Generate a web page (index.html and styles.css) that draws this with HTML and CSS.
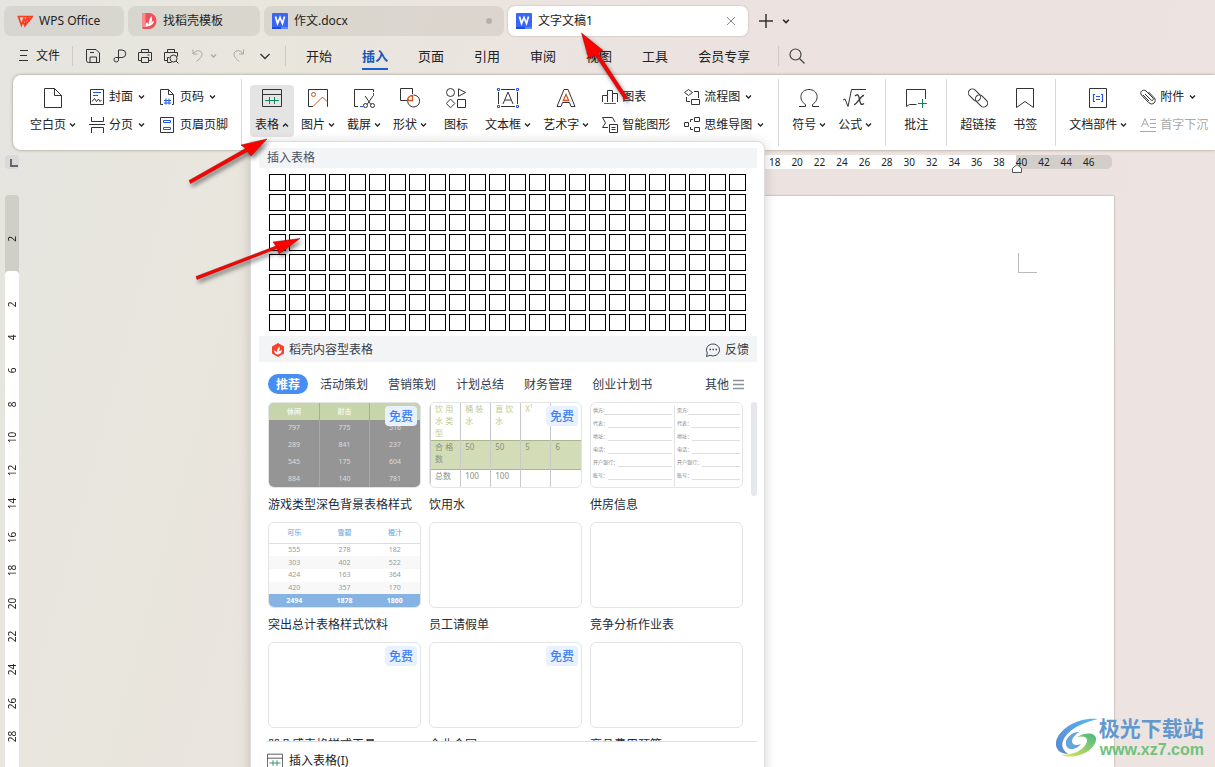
FILE: index.html
```html
<!DOCTYPE html>
<html lang="zh-CN">
<head>
<meta charset="utf-8">
<title>文字文稿1 - WPS Office</title>
<link rel="stylesheet" href="styles.css">
</head>
<body>
<svg class="defs" aria-hidden="true">
  <symbol id="down" viewBox="0 0 7 6"><path d="M1 1.5l2.5 2.5L6 1.5" fill="none" stroke="currentColor" stroke-width="1.3"/></symbol>
  <symbol id="up" viewBox="0 0 7 6"><path d="M1 4.5L3.5 2 6 4.5" fill="none" stroke="currentColor" stroke-width="1.3"/></symbol>
  <symbol id="wdoc" viewBox="0 0 16 16"><rect width="16" height="16" rx="1" fill="#3b66f5"/><path d="M0 14h9v2H0z" fill="#1d4bd8"/><path d="M9 14h7v2H9z" fill="#5b8cff"/><path d="M3.5 3.5l2 7L8 4.5l2.500 6 2-7" fill="none" stroke="#fff" stroke-width="1.700"/></symbol>
  <symbol id="table" viewBox="0 0 20 20"><path d="M.5 1.500h19v17H.5zM.5 6.500h19" fill="none" stroke="#333"/><path d="M3 12.500h14M7.500 9v7M12.500 9v7" stroke="#0c8457" fill="none"/></symbol>
</svg>

<div class="window">
  <header class="tabbar">
    <button class="tab tab-home"><svg width="16" height="16" viewBox="0 0 16 16"><path d="M.5 3.500h10L8.500 9 7 5.500 4.500 12 1.500 3.700M9 8l-1.200 4.500L6 8.500M8 12.500L15.500 3.500h-4l-1 3M11.500 3.500L12 9" fill="none" stroke="#ff3b1f" stroke-width="1.700"/></svg>WPS Office</button>
    <button class="tab tab-template"><svg width="15" height="16" viewBox="0 0 14 16"><path d="M0 0h6.500a7.500 8 0 0 1 0 16H0z" fill="#ee5158"/><path d="M0 0h3v14H0z" fill="#f88"/><path d="M3 14C3 8 5 9 6 11.500 6.500 7 7.500 5 9 3c1 3 .5 5-.5 7 1-1.500 2-2 3-2C11 12 7 13 3 14z" fill="#fff"/></svg>找稻壳模板</button>
    <button class="tab tab-doc"><svg width="16" height="16"><use href="#wdoc"/></svg>作文.docx<span class="dot"></span></button>
    <button class="tab tab-doc active"><svg width="16" height="16"><use href="#wdoc"/></svg>文字文稿1<svg class="close" width="10" height="10" viewBox="0 0 10 10"><path d="M1 1l8 8M9 1L1 9" stroke="#888"/></svg></button>
    <button class="bare new" aria-label="新建"><svg width="14" height="14" viewBox="0 0 14 14"><path d="M7 0v14M0 7h14" stroke="#333" stroke-width="1.500"/></svg></button>
    <button class="bare" aria-label="标签列表"><svg width="8" height="7"><use href="#down"/></svg></button>
  </header>

  <nav class="menubar">
    <button class="bare file"><svg width="10" height="12" viewBox="0 0 10 12"><path d="M1 .5h8M1 5.500h7M0 10.500h9" stroke="#333"/></svg>文件</button>
    <span class="sep"></span>
    <div class="quick">
      <button class="bare" aria-label="保存"><svg width="16" height="16" viewBox="0 0 16 16" fill="none" stroke="#333"><path d="M1.500 1.500h9.500l3.500 3.500v9.500h-11a2 2 0 0 1-2-2zM5 14.500V9h6.500v5.500M5 4.500h4"/></svg></button>
      <button class="bare" aria-label="输出为PDF"><svg width="16" height="16" viewBox="0 0 16 16" fill="none" stroke="#333"><path d="M7.500 12V2h3.500a3 3 0 0 1 0 7.500H4.500a2.300 2.300 0 1 0 3 2.500"/></svg></button>
      <button class="bare" aria-label="打印"><svg width="16" height="16" viewBox="0 0 16 16" fill="none" stroke="#333"><path d="M4.500 4.500v-3h7v3M4 12.500H1.500v-8h13v8H12M4.500 9.500h7v5h-7zM10.500 7h2"/></svg></button>
      <button class="bare" aria-label="打印预览"><svg width="16" height="16" viewBox="0 0 16 16" fill="none" stroke="#333"><path d="M4.500 4.500v-3h7v3M4 12.500H1.500v-8h13v4M4.500 14.500V9.500h2M4.500 14.500h4"/><circle cx="10.500" cy="10.500" r="3.500"/><path d="M13 13l2.500 2.500"/></svg></button>
      <button class="bare dim undo" aria-label="撤销"><svg width="16" height="16" viewBox="0 0 16 16" fill="none" stroke="currentColor"><path d="M4 1.500v4.500h4.500M4 6C7 1 13.500 2 13 7 12.500 10 10 11 7.500 13.500"/></svg><svg width="7" height="6"><use href="#down"/></svg></button>
      <button class="bare dim redo" aria-label="恢复"><svg width="16" height="16" viewBox="0 0 16 16" fill="none" stroke="currentColor"><path d="M12.500 1.500v4.500H8M12.500 6C9 1 2.500 2 3 7 3.500 10 6 11 8 13.500"/></svg></button>
      <button class="bare" aria-label="更多"><svg width="16" height="16" viewBox="0 0 16 16" fill="none" stroke="#333" stroke-width="1.300"><path d="M3.500 6L8 10.500 12.500 6"/></svg></button>
    </div>
    <span class="sep"></span>
    <div class="menus">
      <button class="bare">开始</button><button class="bare current">插入</button><button class="bare">页面</button><button class="bare">引用</button><button class="bare">审阅</button><button class="bare">视图</button><button class="bare">工具</button><button class="bare">会员专享</button>
    </div>
    <span class="sep"></span>
    <button class="bare search" aria-label="搜索"><svg width="16" height="16" viewBox="0 0 16 16" fill="none" stroke="#444" stroke-width="1.200"><circle cx="6.500" cy="6.500" r="5.500"/><path d="M10.500 10.500l5 5"/></svg></button>
  </nav>

  <section class="ribbon">
    <div class="group first">
      <button class="big"><svg width="20" height="20" viewBox="0 0 20 20" fill="none" stroke="#333"><path d="M1.500.5h10l7 7v12h-17zM11.500.5v7h7"/></svg><span>空白页<svg width="7" height="6"><use href="#down"/></svg></span></button>
      <div class="column">
        <button class="small"><svg width="16" height="16" viewBox="0 0 16 16" fill="none" stroke="#333"><path d="M1.500.5h13v15h-13z"/><path d="M4 3.500h8M4 6.500h5" stroke="#2456e0"/><path d="M3 12.500l2.500-3 2 3 2-2.500 1.500 2.500 1.500-1.500"/></svg>封面<svg class="caret" width="7" height="6"><use href="#down"/></svg></button>
        <button class="small"><svg width="16" height="16" viewBox="0 0 16 16" fill="none" stroke="#333"><path d="M2.500 0v4.500h12V0M0 7.500h16M2.500 16v-5.500h12V16"/></svg>分页<svg class="caret" width="7" height="6"><use href="#down"/></svg></button>
      </div>
      <div class="column">
        <button class="small"><svg width="16" height="16" viewBox="0 0 16 16" fill="none" stroke="#333"><path d="M3 15.500H.5V.5h8l5 5v10H12M8.500.5v5h5"/><path d="M6 9.500v6M9 9.500v6M4 11.500h7M4 14h7" stroke="#2456e0"/></svg>页码<svg class="caret" width="7" height="6"><use href="#down"/></svg></button>
        <button class="small"><svg width="16" height="16" viewBox="0 0 16 16" fill="none" stroke="#333"><path d="M.5.5h13v15H.5z"/><path d="M3.500 3.500h7v2h-7zM3.500 10.500h7v2h-7z" stroke="#2456e0"/></svg>页眉页脚</button>
      </div>
    </div>

    <div class="group">
      <div class="anchor">
        <button class="big pressed" aria-expanded="true"><svg width="20" height="20"><use href="#table"/></svg><span>表格<svg width="7" height="6"><use href="#up"/></svg></span></button>

        <div class="popup">
          <h2 class="strip">插入表格</h2>
          <div class="picker" id="picker"></div>
          <div class="strip store"><svg width="14" height="14" viewBox="0 0 14 14"><path d="M7 0l6 3.500v7L7 14l-6-3.500v-7z" fill="#f5412d"/><path d="M3 7.500c1.500 0 2.500 1 3 2 0-3 .5-4.500 2.500-6 0 2 .5 3-.5 4.500 1-.5 2-.5 3-.500-.5 3-3 4-4.500 4C4.500 11 3.300 10 3 7.500z" fill="#fff"/></svg><h2>稻壳内容型表格</h2>
            <button class="bare feedback"><svg width="16" height="16" viewBox="0 0 16 16" fill="none" stroke="#3d4757"><path d="M1.500 14.500l.800-3.500A6.600 6 0 1 1 5 13.300z"/><path d="M4.500 7.500H6M7.500 7.500H9M10.500 7.500H12" stroke-width="1.500"/></svg>反馈</button></div>
          <div class="cats">
            <button class="bare chosen">推荐</button><button class="bare">活动策划</button><button class="bare">营销策划</button><button class="bare">计划总结</button><button class="bare">财务管理</button><button class="bare">创业计划书</button>
            <button class="bare other">其他<svg width="11" height="11" viewBox="0 0 11 11"><path d="M0 1.500h11M0 5.500h11M0 9.500h11" stroke="#8a919e" stroke-width="1.500"/></svg></button>
          </div>
          <div class="scroller">
            <div class="cards">
              <a class="card" href="#"><span class="thumb"><table class="t-dark"><tr><th>休闲</th><th>射击</th><th>竞技</th></tr><tr><td>797</td><td>775</td><td>516</td></tr><tr><td>289</td><td>841</td><td>237</td></tr><tr><td>545</td><td>175</td><td>604</td></tr><tr><td>884</td><td>140</td><td>781</td></tr></table><b class="free">免费</b></span>游戏类型深色背景表格样式</a>
              <a class="card" href="#"><span class="thumb"><table class="t-water"><tr class="head"><th>饮 用<br>水 类<br>型</th><th>桶 装<br>水</th><th>直 饮<br>水</th><th>X<sup>1</sup></th><th></th></tr><tr class="mid"><td>合 格<br>数</td><td>50</td><td>50</td><td>5</td><td>6</td></tr><tr><td>总数</td><td>100</td><td>100</td><td></td><td></td></tr></table><b class="free">免费</b></span>饮用水</a>
              <a class="card" href="#"><span class="thumb form"><span class="half"><i>供方:</i><i>代表：</i><i>地址：</i><i>电话：</i><i>开户银行：</i><i>账号：</i></span><span class="half"><i>需方:</i><i>代表：</i><i>地址：</i><i>电话：</i><i>开户银行：</i><i>账号：</i></span></span>供房信息</a>
              <a class="card" href="#"><span class="thumb"><table class="t-drink"><tr><th>可乐</th><th>雪碧</th><th>橙汁</th></tr><tr><td>555</td><td>278</td><td>182</td></tr><tr><td>303</td><td>402</td><td>522</td></tr><tr><td>424</td><td>163</td><td>364</td></tr><tr><td>420</td><td>357</td><td>170</td></tr><tr class="sum"><td>2494</td><td>1878</td><td>1860</td></tr></table></span>突出总计表格样式饮料</a>
              <a class="card" href="#"><span class="thumb"></span>员工请假单</a>
              <a class="card" href="#"><span class="thumb"></span>竞争分析作业表</a>
              <a class="card" href="#"><span class="thumb"><b class="free">免费</b></span>凹凸感表格样式工具</a>
              <a class="card" href="#"><span class="thumb"><b class="free">免费</b></span>企业合同</a>
              <a class="card" href="#"><span class="thumb"></span>商品费用预算</a>
            </div>
            <span class="bar"></span>
          </div>
          <button class="bare insert"><svg width="16" height="16" viewBox="0 0 20 20"><use href="#table"/></svg>插入表格(I)</button>
        </div>
      </div>
      <button class="big"><svg width="20" height="20" viewBox="0 0 20 20" fill="none" stroke="#333"><path d="M5 18.500H.5v-17h19v17H19"/><circle cx="5.500" cy="6.500" r="2" stroke="#d4551c"/><path d="M5 18.500L14.500 9l5 5" stroke="#d4551c"/></svg><span>图片<svg width="7" height="6"><use href="#down"/></svg></span></button>
      <button class="big"><svg width="22" height="20" viewBox="0 0 22 20" fill="none" stroke="#333"><path d="M5 18.500H1.500v-17h19V4"/><path d="M20.500 5v3M7 18.500h3" stroke="#2456e0"/><path d="M12 8l6 8.500M20 8l-6 8.500"/><circle cx="12.500" cy="17.500" r="2"/><circle cx="19.500" cy="17.500" r="2"/></svg><span>截屏<svg width="7" height="6"><use href="#down"/></svg></span></button>
      <button class="big"><svg width="20" height="20" viewBox="0 0 20 20" fill="none" stroke="#333"><path d="M7 12.500H.5V.5h12V6M8 11a6 6 0 1 0 5.500-4"/><path d="M7.500 12.500h5v-5a5 5 0 0 0-5 5z" stroke="#d4551c" stroke-width="1.300"/></svg><span>形状<svg width="7" height="6"><use href="#down"/></svg></span></button>
      <button class="big"><svg width="20" height="20" viewBox="0 0 20 20" fill="none" stroke="#333"><circle cx="4.500" cy="4.500" r="4"/><path d="M12.500.8v7.500l7-3.800zM4.500 11l4.300 4.500-4.300 4.300L.3 15.500zM11.500 11.500h8v8h-8z"/></svg><span>图标</span></button>
      <button class="big"><svg width="22" height="20" viewBox="0 0 22 20" fill="none" stroke="#333"><path d="M4 1.500h14M4 18.500h14M1.500 4v12M20.500 4v12M6 16l5-12 5 12M8 12h6"/><path d="M.5.500h2v2h-2zM19.500.5h2v2h-2zM.5 17.500h2v2h-2zM19.500 17.500h2v2h-2z" stroke="#2456e0"/></svg><span>文本框<svg width="7" height="6"><use href="#down"/></svg></span></button>
      <button class="big"><svg width="20" height="20" viewBox="0 0 20 20" fill="none" stroke="#333"><path d="M8 1.500h4l7 17h-4l-1.500-4h-7l-1.500 4H1z"/><path d="M10 6.500L7.300 12.500h5.400z" stroke="#d4551c" stroke-width="1.300"/></svg><span>艺术字<svg width="7" height="6"><use href="#down"/></svg></span></button>
      <div class="column">
        <button class="small"><svg width="16" height="16" viewBox="0 0 16 16" fill="none" stroke="#333"><path d="M.5 13V6.500h5V13M5.500 6.500v-5h5V13M10.500 4.500h5V13"/><path d="M2 14.500h12" stroke="#0c8457"/></svg>图表</button>
        <button class="small"><svg width="16" height="16" viewBox="0 0 16 16" fill="none" stroke="#333"><path d="M6 10.500H.5L3.500 6 .5.500h10L13 5M7.500 7.500h8v8h-8zM9.500 10.500h4M9.500 12.500h4"/></svg>智能图形</button>
      </div>
      <div class="column">
        <button class="small"><svg width="16" height="16" viewBox="0 0 16 16" fill="none" stroke="#333"><path d="M4.500.5l4 3-4 3-4-3zM10 2.500h4.500V9M2.500 8v4.500H6M7.500 10.500h8v5h-8z"/></svg>流程图<svg class="caret" width="7" height="6"><use href="#down"/></svg></button>
        <button class="small"><svg width="16" height="16" viewBox="0 0 16 16" fill="none" stroke="#333"><path d="M.5 5.500h4v4h-4zM10.500.5h5v4h-5zM10.500 10.500h5v4h-5zM9 2.500H6.500V5M9 12.500H6.500V10"/></svg>思维导图<svg class="caret" width="7" height="6"><use href="#down"/></svg></button>
      </div>
    </div>

    <div class="group">
      <button class="big"><svg width="20" height="20" viewBox="0 0 20 20" fill="none" stroke="#333"><path d="M0 18.500h6.500v-2C-1 12 1 1.500 10 1.500S21 12 13.500 16.500v2H20"/></svg><span>符号<svg width="7" height="6"><use href="#down"/></svg></span></button>
      <button class="big"><svg width="24" height="20" viewBox="0 0 24 20" fill="none" stroke="#333"><path d="M0 12l2-1 3 7.500L8.500 1.500H23"/><path d="M12 8c3-3 4 0 4.500 3.500S18 18 21 15.500M21 7.500c-3-.5-7 9-10 9" stroke-width="1.300"/></svg><span>公式<svg width="7" height="6"><use href="#down"/></svg></span></button>
    </div>
    <div class="group">
      <button class="big"><svg width="22" height="20" viewBox="0 0 22 20" fill="none" stroke="#333"><path d="M20.500 11V1.500h-19v17l3-2h7"/><path d="M17.500 11v9M13 15.500h9" stroke="#0c8457"/></svg><span>批注</span></button>
    </div>
    <div class="group">
      <button class="big wide"><svg width="20" height="20" viewBox="0 0 20 20" fill="none" stroke="#333"><rect x="-.500" y="3" width="14" height="8" rx="4" transform="rotate(45 6.500 7)"/><rect x="6.500" y="9" width="14" height="8" rx="4" transform="rotate(45 13.500 13)"/></svg><span>超链接</span></button>
      <button class="big"><svg width="20" height="20" viewBox="0 0 20 20" fill="none" stroke="#333"><path d="M1.500.5h17v19L10 13.500l-8.500 6z"/></svg><span>书签</span></button>
    </div>
    <div class="group last">
      <button class="big"><svg width="20" height="20" viewBox="0 0 20 20" fill="none" stroke="#333"><path d="M1.500.5h17v19h-17z"/><path d="M7 6.500H5.500v7H7M13 6.500h1.500v7H13M8 8.500h4M8 11.500h4" stroke="#2456e0" stroke-width="1.200"/></svg><span>文档部件<svg width="7" height="6"><use href="#down"/></svg></span></button>
      <div class="column">
        <button class="small"><svg width="16" height="16" viewBox="0 0 16 16" fill="none" stroke="#333"><path d="M5 5l6 6c1.500 1.500 3-.5 2-2L6 2C3-.5-1 3 1.500 6l7 7.500c4 4 9-1 5.500-5L8.500 3M3 6l6 6"/></svg>附件<svg class="caret" width="7" height="6"><use href="#down"/></svg></button>
        <button class="small" disabled><svg width="16" height="16" viewBox="0 0 16 16" fill="none" stroke="currentColor"><path d="M1.500 10L5 1.500 8.500 10M3 7h4M10 2.500h6M10 6.500h6M10 10.500h6M0 14.500h16"/></svg>首字下沉</button>
      </div>
    </div>
  </section>

  <main class="work">
    <aside class="vside">
      <span class="tabstop"></span>
      <ol class="vruler-top"><li>2</li></ol>
      <ol class="vruler"><li>2</li><li>4</li><li>6</li><li>8</li><li>10</li><li>12</li><li>14</li><li>16</li><li>18</li><li>20</li><li>22</li><li>24</li><li>26</li><li>28</li></ol>
    </aside>
    <div class="canvas">
      <div class="hruler"><ol><li>2</li><li>4</li><li>6</li><li>8</li><li>10</li><li>12</li><li>14</li><li>16</li><li>18</li><li>20</li><li>22</li><li>24</li><li>26</li><li>28</li><li>30</li><li>32</li><li>34</li><li>36</li><li>38</li><li>40</li><li>42</li><li>44</li><li>46</li></ol>
        <svg class="indent" width="10" height="9" viewBox="0 0 10 9"><path d="M5 .7l4.500 3.500v4.300h-9V4.200z" fill="#fff" stroke="#555"/></svg></div>
      <article class="page"><span class="corner"></span></article>
    </div>
  </main>

  <svg class="arrows" aria-hidden="true">
    <g fill="#f00" stroke="#8c1010" stroke-width=".5">
      <path d="M267 139L251 156l-3.500-4.500L190.500 183.500l-1.500-3L245.500 148.500 241 145z"/>
      <path d="M300 238.500L279 254l-2-5.500L197 279.500l-1-3L276 246l-3-4z"/>
      <path d="M581.500 33l21.500 17.500-4.500 3L627.500 97.500l-3 2L595.500 55.500 588.500 58z"/>
    </g>
  </svg>

  <div class="brand">
    <svg width="44" height="42" viewBox="0 0 44 42"><defs><linearGradient id="sky" x1="1" y1="0" x2="0" y2="1"><stop offset="0" stop-color="#58b8f0"/><stop offset="1" stop-color="#5b86cc"/></linearGradient><linearGradient id="leaf" x1="1" y1="0" x2="0" y2="1"><stop offset="0" stop-color="#45b884"/><stop offset="1" stop-color="#e3e65a"/></linearGradient></defs>
      <path d="M43 2C24 0 4 11 1 25c-1 7 4 12 12 12-7-5-7-11-3-17C17 10 30 5 43 2z" fill="url(#sky)"/><path d="M6 38c14 5 33-3 35-15 1-7-9-9-19-3 8-2 12 1 9 7-4 7-13 11-25 11z" fill="url(#leaf)"/><path d="M24 15c-9 0-16 9-12 15 3 4 10 2 14-3-5 2-9 1-9-3 0-3 3-6 7-9z" fill="#62a6dc"/></svg>
    <p><strong>极光下载站</strong><span>www.xz7.com</span></p>
  </div>
</div>
<script src="script.js"></script>
</body>
</html>
```

FILE: styles.css
```css
* { box-sizing: border-box; }
body, h2, ol, p { margin: 0; padding: 0; }
ol { list-style: none; }
body {
  font-family: "Noto Sans", "Noto Sans CJK SC", sans-serif;
  font-size: 12px;
  line-height: 16px;
  color: #222;
}
button { font: inherit; color: inherit; border: 0; background: none; padding: 0; white-space: nowrap; }
svg { flex: none; display: block; }
.defs { position: absolute; width: 0; height: 0; }
.bare { display: flex; align-items: center; }

.window {
  position: relative;
  height: 100vh;
  overflow: hidden;
  display: flex;
  flex-direction: column;
  background: linear-gradient(105deg, #e5e4e0 0, #e8e6dd 18%, #ebe4df 36%, #ece2df 60%, #ede4e1 100%);
}

/* document tabs */
.tabbar { display: flex; align-items: center; gap: 4px; padding: 6px 4px 0; height: 36px; flex: none; }
.tab { display: flex; align-items: center; gap: 6px; height: 30px; border-radius: 7px; background: rgba(90, 85, 70, .1); }
.tab-home { width: 120px; padding-left: 13px; }
.tab-template { width: 132px; padding-left: 14px; }
.tab-doc { width: 240px; padding: 0 12px 0 8px; }
.tab.active { background: #fff; box-shadow: 0 0 2px rgba(0, 0, 0, .25); }
.dot { width: 6px; height: 6px; border-radius: 3px; background: #b5b0ad; margin-left: auto; }
.close { margin-left: auto; }
.new { margin: 0 5px 0 7px; }

/* menu row */
.menubar { display: flex; align-items: center; height: 39px; padding-left: 19px; flex: none; }
.file { gap: 7px; }
.sep { width: 1px; height: 20px; background: #cdc9c5; margin: 0 12px; }
.quick { display: flex; gap: 10px; }
.undo { gap: 5px; }
.redo { margin-left: 4px; }
.dim { color: #aaa7a3; }
.menus { display: flex; gap: 30px; font-size: 13px; margin: 0 16px 0 8px; }
.menus .bare { height: 28px; padding-top: 2px; border-bottom: 2px solid transparent; }
.menus .current { color: #1558c0; font-weight: bold; border-color: #1a5fd0; }
.search { margin-left: -2px; }

/* ribbon */
.ribbon {
  position: relative;
  z-index: 1;
  display: flex;
  flex: none;
  height: 75px;
  margin-left: 13px;
  background: #fff;
  border-radius: 8px 0 0 8px;
  box-shadow: 0 0 3px rgba(70, 60, 50, .5);
}
.group { display: flex; align-items: flex-start; gap: 2px; margin: 4px 0; padding: 6px 8px 0; border-right: 1px solid #d8d8d8; }
.group.first { padding: 6px 6px 0 12px; }
.group.first .column { padding-right: 7px; }
.group.last { border: 0; }
.big {
  display: flex;
  flex-direction: column;
  align-items: center;
  justify-content: space-between;
  min-width: 44px;
  height: 52px;
  padding: 3px 5px 4px;
  border-radius: 4px;
}
.big.wide { min-width: 46px; }
.big span { display: flex; align-items: center; gap: 3px; }
.pressed { background: #e4e4e4; }
.column { display: flex; flex-direction: column; gap: 8px; padding: 2px 6px 0; }
.small { display: flex; align-items: center; gap: 4px; height: 20px; }
.small .caret { margin-left: 1px; }
.small:disabled { color: #aaa; }
.anchor { position: relative; }

/* table menu */
.popup {
  position: absolute;
  top: 56px;
  left: 0;
  width: 515px;
  padding: 6px 7px 8px 8px;
  background: #fff;
  border: 1px solid #dcdde0;
  border-radius: 0 8px 0 0;
  box-shadow: 0 2px 12px rgba(60, 50, 40, .22);
  color: #333c4a;
}
.strip { display: flex; align-items: center; height: 20px; padding: 0 8px; background: #f3f4f6; font-size: 12px; font-weight: normal; color: #4a5260; }
.picker { display: grid; grid-template-columns: repeat(24, 17px); grid-auto-rows: 17px; gap: 3px; padding: 6px 10px 5px; }
.picker button { border: 1px solid #000; background: #fff; }
.store { height: 26px; padding: 2px 8px 0 12px; color: #333c4a; }
.store h2 { font-size: 12px; font-weight: normal; margin-left: 4px; }
.feedback { gap: 4px; margin-left: auto; }
.cats { display: flex; align-items: center; gap: 20px; padding: 12px 13px 8px 9px; }
.cats .bare { height: 20px; padding-top: 1px; }
.cats .chosen { padding: 1px 8px 0; margin-right: -8px; border-radius: 10px; background: #468df4; color: #fff; font-weight: bold; }
.cats .other { margin-left: auto; gap: 4px; }
.scroller { display: flex; justify-content: space-between; height: 340px; overflow: hidden; margin-left: 8px; border-bottom: 1px solid #dcdde0; }
.cards { display: grid; grid-template-columns: repeat(3, 153px); grid-auto-rows: 112px; gap: 8px; padding-left: 1px; }
.card { color: #222c3a; text-decoration: none; white-space: nowrap; }
.thumb { position: relative; display: block; height: 86px; margin-bottom: 9px; overflow: hidden; border: 1px solid #e3e4e6; border-radius: 6px; }
.free { position: absolute; top: 3px; right: 3px; padding: 3px 4px 1px; border-radius: 4px; background: #e8f1ff; color: #417ff9; font-weight: 500; }
.bar { width: 6px; height: 94px; border-radius: 3px; background: #e6e7ea; }
.insert { gap: 6px; padding: 11px 8px 8px; color: #222; }

.thumb table { width: 100%; height: 100%; border-collapse: collapse; table-layout: fixed; font-size: 7px; line-height: 8px; text-align: center; }
.thumb th, .thumb td { padding: 0; }
.t-dark { background: #959595; color: #ddd; }
.t-dark th { background: #c6d5ac; color: #f2f6ea; font-family: "Noto Sans CJK SC", sans-serif; }
.t-dark th + th, .t-dark td + td { border-left: 1px solid #a9a9a9; }
.thumb .t-water { font-size: 8px; line-height: 12px; text-align: left; color: #8b9180; }
.t-water .head { height: 37px; }
.t-water th { color: #bccb96; font-weight: normal; }
.t-water th, .t-water td { vertical-align: top; border-left: 1px solid #c9c9c9; }
.thumb .t-water th, .thumb .t-water td { padding-left: 4px; }
.t-water .mid { height: 29px; background: #d2ddb7; border-top: 1px solid #aab58f; border-bottom: 1px solid #aab58f; }
.t-water sup { font-size: 5px; line-height: 0; }
.t-drink { color: #999; }
.t-drink th { height: 20px; color: #8bb9e8; border-bottom: 1px solid #ddd; }
.t-drink tr:nth-child(odd) td { background: #f8f8f8; }
.t-drink .sum td { background: #86b3e4; color: #fff; font-weight: bold; }
.form { display: flex; padding: 3px 0 0; }
.half { flex: 4; display: flex; flex-direction: column; gap: 4px; padding: 0 2px; border-left: 1px solid #e2e2e2; }
.half:first-child { flex: 5; border: 0; }
.half i { display: flex; font-size: 5px; font-style: normal; line-height: 9px; color: #888; }
.half i::after { content: ""; flex: 1; height: 8px; border-bottom: 1px solid #ddd; }

/* work area */
.work { display: flex; flex: 1; min-height: 0; }
.vside { display: flex; flex-direction: column; width: 19px; padding: 5px 0 0 5px; font-size: 10px; line-height: 14px; }
.tabstop { flex: none; width: 14px; height: 14px; border-radius: 4px; background: #d9d9da; padding: 4px 3px 4px 5px; }
.tabstop::before { content: ""; display: block; width: 6px; height: 6px; border: solid #666; border-width: 0 0 2px 2px; }
.vside li { display: flex; align-items: center; justify-content: center; writing-mode: vertical-rl; transform: rotate(180deg); }
.vruler-top { flex: none; height: 80px; margin-top: 26px; padding-top: 41px; border-radius: 4px 4px 0 0; background: #cfcec7; }
.vruler { flex: 1 0 auto; display: grid; grid-template-rows: repeat(14, 1fr); align-content: start; margin-top: -4px; padding: 17px 0 14px; height: 496px; border-radius: 4px 4px 0 0; background: #fff; }
.canvas { flex: 1; display: flex; flex-direction: column; align-items: flex-end; min-width: 0; }
.hruler { position: relative; flex: none; width: 788px; height: 14px; margin: 5px 103px 0 0; padding-right: 12px; border-radius: 5px; background: linear-gradient(to left, #d3cec9 96px, #fff 0); font-size: 10px; line-height: 14px; text-align: center; }
.hruler ol { display: grid; grid-template-columns: repeat(23, 1fr); width: 516px; margin-left: auto; }
.indent { position: absolute; right: 90px; top: 9px; }
.page { flex: 1; width: 794px; margin: 27px 101px 0 0; padding: 57px 77px 0; background: #fff; box-shadow: 0 0 2px rgba(0, 0, 0, .35); }
.corner { display: block; width: 19px; height: 20px; margin-left: auto; border: solid #bbb; border-width: 0 0 1px 1px; }

/* overlays */
.arrows { position: absolute; inset: 0; z-index: 2; width: 100%; height: 100%; pointer-events: none; filter: drop-shadow(2px 3px 2px rgba(0, 0, 0, .5)); }
.brand { position: absolute; z-index: 3; right: 11px; bottom: 7px; display: flex; align-items: center; }
.brand p { display: flex; flex-direction: column; }
.brand strong { font-size: 21px; line-height: 24px; color: #6398cf; }
.brand span { padding-left: 1px; font: bold 16px/20px "Liberation Sans", sans-serif; color: #6fc27c; }
```

FILE: script.js
```js
const picker = document.getElementById("picker");
for (let row = 1; row <= 8; row++) {
  for (let col = 1; col <= 24; col++) {
    const cell = document.createElement("button");
    cell.setAttribute("aria-label", `${row} × ${col}`);
    picker.append(cell);
  }
}
```
